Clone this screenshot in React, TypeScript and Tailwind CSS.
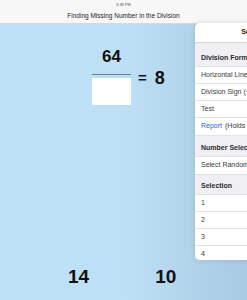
import React from "react";

const font = { fontFamily: '"Helvetica Neue", "Liberation Sans", Arial, sans-serif' };

function SectionHeader({ label, h }: { label: string; h: string }) {
  return (
    <div className={`flex items-end bg-[#efeff4] px-[6px] pb-[3px] ${h}`}>
      <span className="whitespace-nowrap text-[7px] font-bold text-[#2b2b2b]">{label}</span>
    </div>
  );
}

function Row({ children, last }: { children: React.ReactNode; last?: boolean }) {
  return (
    <div
      className={`flex h-[17px] items-center whitespace-nowrap bg-white pl-[6px] text-[7px] text-[#3a3a3a] ${
        last ? "" : "border-b border-[#e2e2e6]"
      }`}
    >
      {children}
    </div>
  );
}

export default function App() {
  return (
    <div className="relative h-[300px] w-[247px] overflow-hidden" style={font}>
      <div className="flex h-[24px] flex-col items-center border-b border-[#d9d9d9] bg-[#f7f7f7]">
        <div className="mt-[2px] text-[4px] leading-[5px] text-[#555]">3:38 PM</div>
        <div className="mt-[5px] text-[6.5px] font-medium leading-[8px] text-[#1f1f1f]">
          Finding Missing Number in the Division
        </div>
      </div>

      <div className="h-[276px] bg-[linear-gradient(to_right,#bee0f6_50%,#a8cae2)]">
        <div className="flex items-start pl-[92px] pt-[23px]">
          <div className="flex w-[39px] flex-col items-center">
            <div className="text-[17px] font-bold leading-[20px] text-[#111]">64</div>
            <div className="mt-[7px] h-px w-[39px] bg-[#6f7f8c]" />
            <div className="mt-[3px] h-[27px] w-[39px] rounded-[1px] bg-white" />
          </div>
          <div className="ml-[7px] mt-[21px] flex items-center">
            <span className="text-[15px] font-bold leading-[18px] text-[#111]">=</span>
            <span className="ml-[8px] text-[18px] font-bold leading-[20px] text-[#111]">8</span>
          </div>
        </div>
        <div className="mt-[162px] flex pl-[68px]">
          <span className="text-[19px] font-bold leading-[20px] text-[#111]">14</span>
          <span className="ml-[66px] text-[19px] font-bold leading-[20px] text-[#111]">10</span>
        </div>
      </div>

      <div className="absolute left-[195px] top-[23px] h-[237px] w-[120px] overflow-hidden rounded-l-[5px] bg-[#efeff4] shadow-[0_0_6px_rgba(0,0,0,0.12)]">
        <div className="flex h-[20px] items-center justify-center border-b border-[#d8d8dc] bg-white text-[7px] font-semibold text-[#222]">
          Settings
        </div>
        <SectionHeader label="Division Format" h="h-[23px]" />
        <div className="border-y border-[#e2e2e6]">
          <Row>Horizontal Line</Row>
          <Row>Division Sign (÷)</Row>
          <Row>Test</Row>
          <Row last>
            <span className="text-[#2f5bd8]">Report</span>
            <span className="ml-[3px]">(Holds Only)</span>
          </Row>
        </div>
        <SectionHeader label="Number Selection" h="h-[20px]" />
        <div className="border-y border-[#e2e2e6]">
          <Row last>Select Random</Row>
        </div>
        <SectionHeader label="Selection" h="h-[19px]" />
        <div className="border-t border-[#e2e2e6]">
          <Row>1</Row>
          <Row>2</Row>
          <Row>3</Row>
          <Row last>4</Row>
        </div>
      </div>
    </div>
  );
}
